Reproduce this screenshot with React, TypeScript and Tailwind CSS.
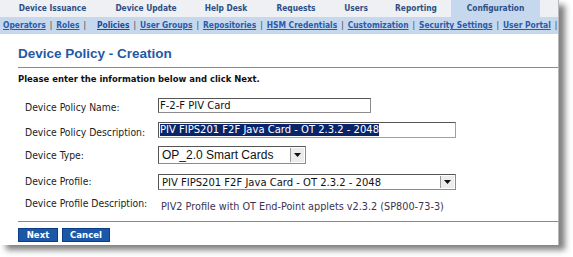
import React from "react";

const tabs: { label: string; w: string; active?: boolean }[] = [
  { label: "Device Issuance", w: "w-[97px]" },
  { label: "Device Update", w: "w-[90px]" },
  { label: "Help Desk", w: "w-[70px]" },
  { label: "Requests", w: "w-[70px]" },
  { label: "Users", w: "w-[50px]" },
  { label: "Reporting", w: "w-[70px]" },
  { label: "Configuration", w: "w-[89px]", active: true },
];

const sub = [
  "Operators",
  "Roles",
  "Policies",
  "User Groups",
  "Repositories",
  "HSM Credentials",
  "Customization",
  "Security Settings",
  "User Portal",
];

function Arrow() {
  return (
    <div className="ml-auto flex h-full w-[14px] items-center justify-center border-l border-[#9a9a9a] bg-[#ececec]">
      <svg width="7" height="4" viewBox="0 0 7 4">
        <path d="M0 0H7L3.5 4Z" fill="#111" />
      </svg>
    </div>
  );
}

export default function App() {
  return (
    <div className="h-[257px] w-[573px] overflow-hidden bg-white">
      <div className="h-[245px] w-[559px] overflow-hidden border-r border-[#b8b8b8] bg-white font-['DejaVu_Sans_Condensed','DejaVu_Sans',sans-serif] shadow-[6px_5px_6px_rgba(0,0,0,0.5)]">
        {/* tabs */}
        <div className="flex h-[17px] bg-[#eef0f3] pl-[4px]">
          {tabs.map((t) => (
            <div
              key={t.label}
              className={`${t.w} flex shrink-0 items-center justify-center text-[8.3px] font-bold text-[#2d4f86] ${
                t.active ? "bg-[#c6d8ee] text-[#1f3f78]" : ""
              }`}
            >
              {t.label}
            </div>
          ))}
        </div>
        {/* sub nav */}
        <div className="flex h-[17px] items-center whitespace-nowrap bg-[#c6d8ee] pl-[3px] text-[8.4px] font-bold text-[#2a5ba8]">
          {sub.map((s, i) => (
            <React.Fragment key={s}>
              {i > 0 && <span className="mx-[4px] font-normal text-[#3a3a3a]">|</span>}
              {s === "Policies" && (
                <svg width="8" height="8" viewBox="0 0 8 8" className="mr-[4px] ml-[3px]">
                  <circle cx="4" cy="4" r="4" fill="#f07c1e" />
                  <path d="M3 2L5.2 4L3 6" stroke="#fff" strokeWidth="1.4" fill="none" />
                </svg>
              )}
              <span className={`underline ${s === "Policies" ? "text-[#1c4b96]" : ""}`}>{s}</span>
            </React.Fragment>
          ))}
          <span className="mx-[4px] font-normal text-[#3a3a3a]">|</span>
        </div>

        <div className="pl-[18px]">
          <div className="pt-[12px] font-['Liberation_Sans',Arial,sans-serif] text-[13.5px] leading-[16px] font-bold text-[#1f5aa6]">
            Device Policy - Creation
          </div>
          <div className="mt-[5px] h-px bg-[#8a8a8a]" />
          <div className="mt-[5px] text-[9.4px] leading-[12px] font-bold text-[#111]">
            Please enter the information below and click Next.
          </div>

          <div className="mt-[13px] flex flex-col pl-[7px] text-[10.3px] text-[#222]">
            <div className="flex h-[15px] items-center">
              <div className="w-[133px] shrink-0 pt-[5px]">Device Policy Name:</div>
              <div className="flex h-[15px] w-[213px] items-center border border-[#8c8c8c] border-t-[#555] border-l-[#555] bg-white pl-[1px] font-['DejaVu_Sans',sans-serif] text-[10px] text-[#111]">
                F-2-F PIV Card
              </div>
            </div>
            <div className="mt-[9px] flex h-[16px] items-center">
              <div className="w-[133px] shrink-0 pt-[6px]">Device Policy Description:</div>
              <div className="flex h-[16px] w-[298px] items-center border border-[#a0a0a0] border-t-[#555] border-l-[#555] bg-white pl-[1px] font-['DejaVu_Sans',sans-serif] text-[10px]">
                <span className="bg-[#0a246a] leading-[12px] text-white">PIV FIPS201 F2F Java Card - OT 2.3.2 - 2048</span>
              </div>
            </div>
            <div className="mt-[8px] flex h-[18px] items-center">
              <div className="w-[133px] shrink-0 pt-[1px]">Device Type:</div>
              <div className="flex h-[18px] w-[148px] items-center border border-[#8c8c8c] border-t-[#555] border-l-[#555] bg-white p-[1px]">
                <span className="pl-[2px] font-['Liberation_Sans',Arial,sans-serif] text-[12px] text-[#111]">OP_2.0 Smart Cards</span>
                <Arrow />
              </div>
            </div>
            <div className="mt-[10px] flex h-[16px] items-center">
              <div className="w-[133px] shrink-0">Device Profile:</div>
              <div className="flex h-[16px] w-[298px] items-center border border-[#8c8c8c] border-t-[#555] border-l-[#555] bg-white p-[1px]">
                <span className="pl-[2px] font-['DejaVu_Sans',sans-serif] text-[10px] text-[#111]">PIV FIPS201 F2F Java Card - OT 2.3.2 - 2048</span>
                <Arrow />
              </div>
            </div>
            <div className="mt-[6px] flex h-[16px] items-center">
              <div className="w-[136px] shrink-0">Device Profile Description:</div>
              <div className="pt-[6px] font-['DejaVu_Sans',sans-serif] text-[9.7px] text-[#3b3350]">
                PIV2 Profile with OT End-Point applets v2.3.2 (SP800-73-3)
              </div>
            </div>
          </div>

          <div className="mt-[9px] h-px bg-[#8a8a8a]" />
          <div className="mt-[6px] flex gap-[4px] text-[9.5px] font-bold text-white">
            <div className="flex h-[14px] w-[40px] items-center justify-center border border-[#0b3d82] bg-[#1b58a7]">Next</div>
            <div className="flex h-[14px] w-[48px] items-center justify-center border border-[#0b3d82] bg-[#1b58a7]">Cancel</div>
          </div>
        </div>
      </div>
    </div>
  );
}
